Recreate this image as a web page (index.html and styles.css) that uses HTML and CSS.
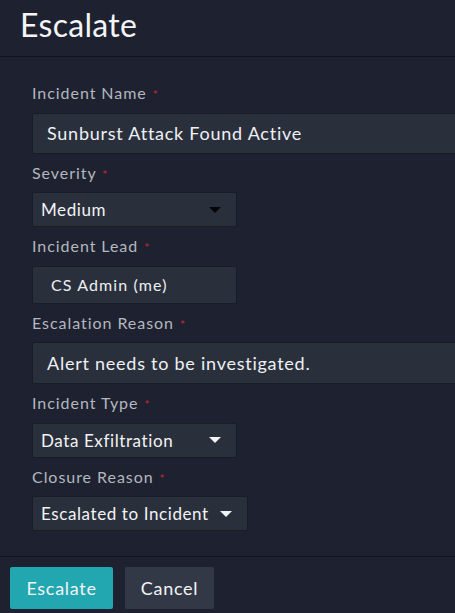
FILE: index.html
```html
<!DOCTYPE html>
<html lang="en">
<head>
<meta charset="utf-8">
<title>Escalate</title>
<link rel="stylesheet" href="styles.css">
</head>
<body>
<div class="dialog">
  <header class="header">
    <h1 class="title">Escalate</h1>
  </header>
  <form class="form">
    <div class="field">
      <label class="label">Incident Name <span class="req">*</span></label>
      <div class="input input-wide">Sunburst Attack Found Active</div>
    </div>
    <div class="field">
      <label class="label">Severity <span class="req">*</span></label>
      <div class="select">
        <span class="select-text">Medium</span>
        <span class="caret caret-dark"></span>
      </div>
    </div>
    <div class="field">
      <label class="label">Incident Lead <span class="req">*</span></label>
      <div class="input input-lead">CS Admin (me)</div>
    </div>
    <div class="field">
      <label class="label">Escalation Reason <span class="req">*</span></label>
      <div class="input input-wide input-reason">Alert needs to be investigated.</div>
    </div>
    <div class="field">
      <label class="label">Incident Type <span class="req">*</span></label>
      <div class="select">
        <span class="select-text">Data Exfiltration</span>
        <span class="caret"></span>
      </div>
    </div>
    <div class="field">
      <label class="label">Closure Reason <span class="req">*</span></label>
      <div class="select">
        <span class="select-text">Escalated to Incident</span>
        <span class="caret"></span>
      </div>
    </div>
  </form>
  <footer class="footer">
    <button class="btn btn-primary" type="button">Escalate</button>
    <button class="btn btn-secondary" type="button">Cancel</button>
  </footer>
</div>
</body>
</html>
```
FILE: styles.css
```css
html, body {
  margin: 0;
  padding: 0;
  background: #1e2230;
  overflow: hidden;
}
body {
  font-family: Lato, "Open Sans", sans-serif;
  color: #eef0f3;
  width: 455px;
  height: 613px;
}
.dialog {
  display: flex;
  flex-direction: column;
  overflow: hidden;
}
.header {
  height: 57px;
  box-sizing: border-box;
  padding: 6px 20px 0;
  border-bottom: 1px solid #12151c;
}
.title {
  margin: 0;
  font-size: 32px;
  font-weight: 400;
  line-height: 38px;
  color: #f4f5f7;
  letter-spacing: 0.3px;
}
.form {
  display: flex;
  flex-direction: column;
  gap: 10px;
  padding: 27px 0 25px 32px;
}
.field {
  display: flex;
  flex-direction: column;
  align-items: flex-start;
  gap: 10px;
}
.label {
  display: block;
  font-size: 16px;
  line-height: 18.5px;
  height: 18.5px;
  color: #b3b7bf;
  letter-spacing: 0.95px;
}
.req {
  color: #c8282c;
  font-size: 12px;
  line-height: 0;
  margin-left: 1px;
}
.input {
  box-sizing: border-box;
  background: #2a2f3c;
  border: 1px solid #1a1d26;
  border-radius: 2px;
  color: #eef0f3;
  display: flex;
  align-items: center;
}
.input-wide {
  width: 460px;
  height: 41px;
  padding-left: 14px;
  font-size: 18px;
  letter-spacing: 0.75px;
}
.input-reason {
  height: 42px;
}
.input-lead {
  width: 205px;
  height: 38px;
  padding-left: 18px;
  font-size: 16px;
  letter-spacing: 1.1px;
}
.select {
  box-sizing: border-box;
  min-width: 205px;
  height: 35px;
  background: #2a2f3c;
  border: 1px solid #1a1d26;
  border-radius: 2px;
  display: inline-flex;
  align-items: center;
  justify-content: space-between;
  gap: 11px;
  padding: 0 15px 0 8px;
  font-size: 17px;
  font-weight: 400;
  letter-spacing: 0.6px;
  color: #f2f3f5;
}
.caret {
  width: 0;
  height: 0;
  border-left: 6px solid transparent;
  border-right: 6px solid transparent;
  border-top: 6px solid #f2f3f5;
}
.caret-dark {
  border-top-color: #050608;
}
.footer {
  border-top: 1px solid #12151c;
  padding: 10px 10px 0;
  display: flex;
  gap: 12px;
}
.btn {
  height: 42px;
  border: none;
  border-radius: 2px;
  font-family: Lato, "Open Sans", sans-serif;
  font-size: 18px;
  letter-spacing: 0.7px;
  color: #f2f4f6;
  cursor: pointer;
  padding: 0;
}
.btn-primary {
  width: 103px;
  background: #22a6b0;
}
.btn-secondary {
  width: 89px;
  background: #323845;
}
```
